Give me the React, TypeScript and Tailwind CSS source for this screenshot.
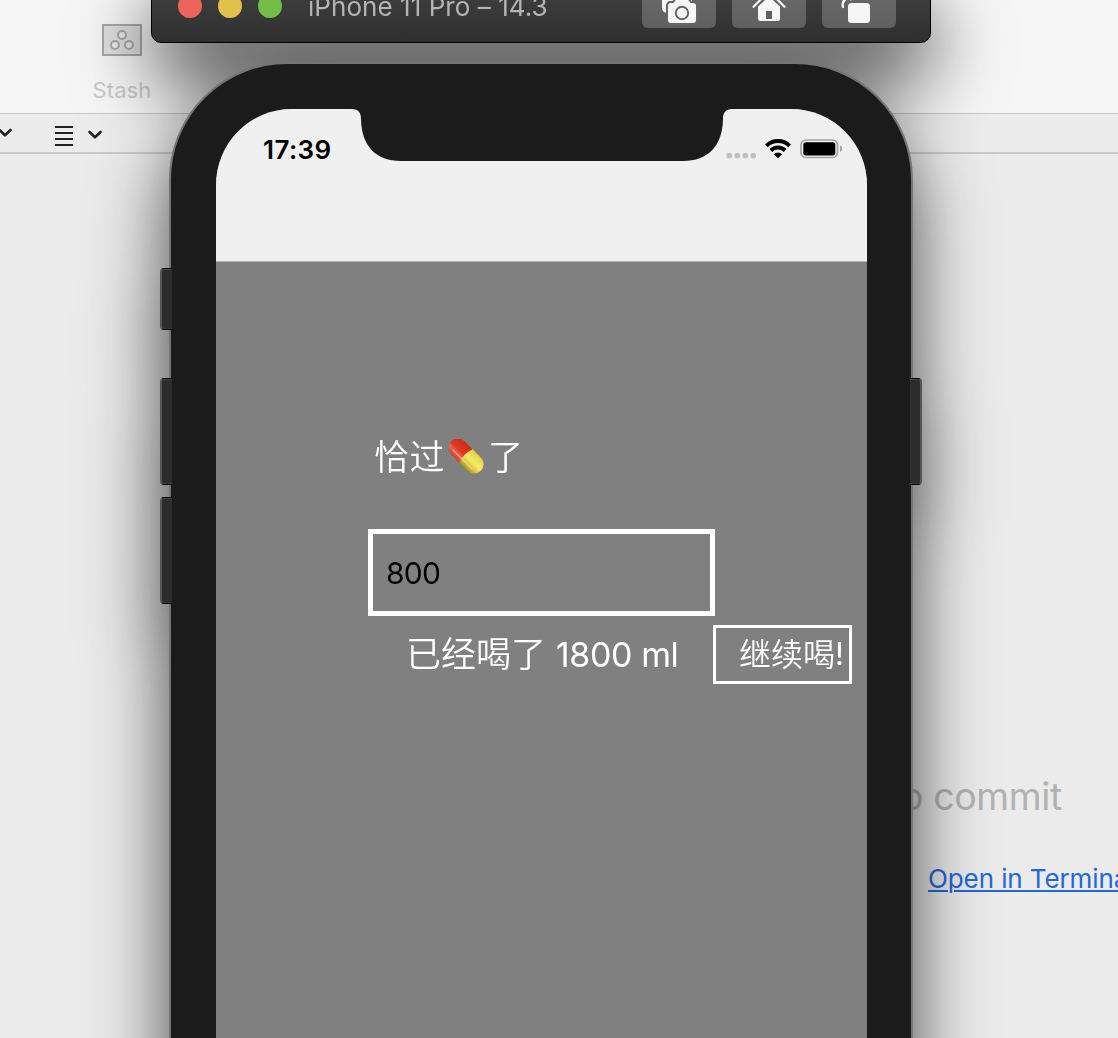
import React from "react";

const inter = "font-['Inter','Noto_Sans_CJK_SC',sans-serif]";

function StashIcon() {
  return (
    <svg width="40" height="32" viewBox="0 0 40 32" fill="none" stroke="#a8a8a8">
      <rect x="1" y="1" width="38" height="30" fill="#e0e0e0" strokeWidth="2" />
      <g fill="#ececec" strokeWidth="2">
        <circle cx="20" cy="11" r="4" />
        <circle cx="13" cy="21" r="4" />
        <circle cx="27" cy="21" r="4" />
      </g>
    </svg>
  );
}

function Chevron() {
  return (
    <svg width="16" height="10" viewBox="0 0 16 10" fill="none" stroke="#222" strokeWidth="2.6" strokeLinecap="round" strokeLinejoin="round">
      <path d="M2.5 2 8 7.3 13.5 2" />
    </svg>
  );
}

function ListIcon() {
  return (
    <svg width="18" height="20" viewBox="0 0 18 20" fill="#222">
      <rect y="0" width="18" height="2" />
      <rect y="6" width="18" height="2" />
      <rect y="12" width="18" height="2" />
      <rect y="18" width="18" height="2" />
    </svg>
  );
}

function GitWindow() {
  return (
    <div className="flex h-full w-full flex-col bg-[#ebebeb]">
      <div className="flex h-[113px] shrink-0 bg-[#f6f6f6] pl-[92px] pt-6">
        <div className="flex w-[60px] flex-col items-center">
          <StashIcon />
          <span className="mt-[19px] text-[22px] leading-[30px] tracking-[0.1px] text-[#c9c9c9]">Stash</span>
        </div>
      </div>
      <div className="flex h-[41px] shrink-0 items-center border-b-2 border-t border-b-[#cacaca] border-t-[#c8c8c8] bg-[#ececec]">
        <div className="-ml-[3px]">
          <Chevron />
        </div>
        <div className="ml-[42px] mt-[5px]">
          <ListIcon />
        </div>
        <div className="ml-[14px] mt-[3px]">
          <Chevron />
        </div>
      </div>
      <div className="flex flex-1 flex-col items-start pt-[619px]">
        <span className="ml-[901px] w-[160px] whitespace-nowrap text-[37.5px] leading-[48px] tracking-[-0.4px] text-[#b2b2b2]">
          o commit
        </span>
        <span className="ml-[928px] mt-[42px] whitespace-nowrap text-[26px] leading-[32px] tracking-[-0.1px] text-[#2268d8] underline decoration-2 underline-offset-[2px]">
          Open in Terminal
        </span>
      </div>
    </div>
  );
}

function ToolButton({ children }: { children: React.ReactNode }) {
  return (
    <div className="flex h-[44px] w-[74px] items-end justify-center rounded-[6px] bg-gradient-to-b from-[#6b6b6b] to-[#606060]">
      {children}
    </div>
  );
}

function TitleBar() {
  return (
    <div className="-mt-[30px] flex h-[73px] w-[780px] items-start rounded-[10px] border border-black bg-gradient-to-b from-[#454545] to-[#2f2f2f] pl-[26px] pr-[34px]">
      <div className="mt-[23px] flex gap-4">
        <i className="size-6 rounded-full bg-[#ee665b]" />
        <i className="size-6 rounded-full bg-[#e1c04c]" />
        <i className="size-6 rounded-full bg-[#72be47]" />
      </div>
      <span className="ml-[26px] mt-[20px] whitespace-nowrap text-[26px] leading-[32px] tracking-[0.05px] text-[#b4b4b4]">
        iPhone 11 Pro – 14.3
      </span>
      <div className="ml-auto mt-[13px] flex gap-4">
        <ToolButton>
          <svg width="74" height="44" viewBox="0 0 74 44">
            <path d="M20 12h30v6H31l-4 2-2 9c-3-.5-5-2-5-5z" fill="#f6f6f6" />
            <path
              d="M28 19h3.500l3-4h11l3 4H51a3 3 0 0 1 3 3v14a3 3 0 0 1-3 3H29a3 3 0 0 1-3-3V22a3 3 0 0 1 2-3z"
              fill="#f6f6f6"
              stroke="#666"
              strokeWidth="4"
              paintOrder="stroke"
            />
            <circle cx="40" cy="29" r="6.2" fill="none" stroke="#626262" strokeWidth="1.9" />
          </svg>
        </ToolButton>
        <ToolButton>
          <svg width="74" height="44" viewBox="0 0 74 44">
            <path d="M37 12.5 48 22.5v12a2.500 2.500 0 0 1-2.500 2.500h-17a2.500 2.500 0 0 1-2.500-2.500V22.500z" fill="#f6f6f6" />
            <path d="M21.500 22.800 37 7.300 52.500 22.800" fill="none" stroke="#646464" strokeWidth="5.500" />
            <path d="M21.500 22.800 37 7.300 52.500 22.800" fill="none" stroke="#f6f6f6" strokeWidth="2.300" strokeLinecap="round" />
            <rect x="34" y="27" width="6" height="8" fill="#606060" />
          </svg>
        </ToolButton>
        <ToolButton>
          <svg width="74" height="44" viewBox="0 0 74 44">
            <rect x="26" y="19" width="22" height="20" rx="3.500" fill="#f6f6f6" />
            <path d="M21 23C20 19.500 21 17 24 14.500" fill="none" stroke="#f6f6f6" strokeWidth="2.300" strokeLinecap="round" />
            <path d="M28.500 13v4l3.500-3z" fill="#f6f6f6" />
          </svg>
        </ToolButton>
      </div>
    </div>
  );
}

function Notch() {
  return (
    <svg className="block shrink-0" width="382" height="53" viewBox="0 0 382 53" fill="#1b1b1b">
      <path d="M0 0C7 0 10 3 10 10C10.500 37 25 52 50 52H332C357 52 371.500 37 372 10C372 3 375 0 382 0Z" />
    </svg>
  );
}

function StatusIcons() {
  return (
    <svg width="118" height="24" viewBox="0 0 118 24">
      <g fill="#c3c3c3">
        <rect x="0.500" y="15" width="5.500" height="5.500" rx="1.800" />
        <rect x="8.500" y="15" width="5.500" height="5.500" rx="1.800" />
        <rect x="16.500" y="15" width="5.500" height="5.500" rx="1.800" />
        <rect x="24.500" y="15" width="5.500" height="5.500" rx="1.800" />
      </g>
      <g fill="none" stroke="#000" strokeWidth="3.900">
        <path d="M40.400 7.800A16.600 16.600 0 0 1 63.600 7.800" />
        <path d="M44.800 12.500A10.200 10.200 0 0 1 59.200 12.500" />
      </g>
      <path d="M52 20.300 47.900 16.200A5.800 5.800 0 0 1 56.100 16.200Z" />
      <rect x="75" y="2" width="36.500" height="17.500" rx="5" fill="none" stroke="#a5a5a5" strokeWidth="1.700" />
      <rect x="77.300" y="4.200" width="32" height="13.200" rx="2.600" />
      <path d="M114 7.500c2.700 1.200 2.700 5.200 0 6.400z" fill="#a0a0a0" />
    </svg>
  );
}

function Pill() {
  return (
    <svg className="mx-[3px] inline-block" width="37" height="37" viewBox="0 0 37 37">
      <defs>
        <linearGradient id="red" x1="0" y1="1" x2="0" y2="0">
          <stop offset="0" stopColor="#c23a26" />
          <stop offset="0.250" stopColor="#ea6a55" />
          <stop offset="0.450" stopColor="#e23a24" />
          <stop offset="1" stopColor="#cc2a18" />
        </linearGradient>
        <linearGradient id="yellow" x1="0" y1="0" x2="0" y2="1">
          <stop offset="0" stopColor="#e6d040" />
          <stop offset="0.450" stopColor="#f7ec6a" />
          <stop offset="0.750" stopColor="#dcc740" />
          <stop offset="1" stopColor="#a98f22" />
        </linearGradient>
      </defs>
      <g transform="translate(18 17) rotate(45)">
        <path d="M0-9.400H-11.500A9.400 9.400 0 0 0-11.500 9.400H0Z" fill="url(#red)" />
        <path d="M0-9.400H11.500A9.400 9.400 0 0 1 11.500 9.400H0Q-3.500 0 0-9.400Z" fill="url(#yellow)" />
        <path d="M-13 5H13" stroke="#fff" strokeOpacity="0.400" strokeWidth="1.100" strokeLinecap="round" />
      </g>
    </svg>
  );
}

function SideButton({ className }: { className: string }) {
  return (
    <div className={`absolute z-10 border-y border-y-black bg-[#2c2c2c] shadow-[inset_0_1px_0_#484848,inset_0_-1px_0_#3a3a3a] ${className}`} />
  );
}

function Phone() {
  return (
    <div className="relative mt-[19px] h-[1400px] w-[744px]">
      <SideButton className="-left-[9px] top-[206px] h-[62px] w-[12px] rounded-l-[4px] border-l-2 border-l-[#555]" />
      <SideButton className="-left-[9px] top-[316px] h-[107px] w-[12px] rounded-l-[4px] border-l-2 border-l-[#555]" />
      <SideButton className="-left-[9px] top-[435px] h-[107px] w-[12px] rounded-l-[4px] border-l-2 border-l-[#555]" />
      <SideButton className="-right-[9px] top-[316px] h-[107px] w-[12px] rounded-r-[4px] border-r-2 border-r-[#555]" />
      <div className="relative h-full rounded-[118px] border-2 border-[#747474] bg-[#1b1b1b] pl-[45px] pr-[44px] pt-[45px]">
        <div className="flex h-[1300px] flex-col overflow-hidden rounded-[76px] bg-[#808080]">
          <div className="flex h-[153px] shrink-0 items-start border-b border-[#b2b5b2] bg-[#f0f0f0]">
            <div className="w-[135px] shrink-0 pl-[47px] pt-[25px] text-[26px] font-semibold leading-[32px] tracking-[0.4px] text-black">
              17:39
            </div>
            <Notch />
            <div className="-ml-[7px] pt-[29px]">
              <StatusIcons />
            </div>
          </div>
          <div className="flex flex-col items-start pl-[152px] font-[350] text-white">
            <div className="ml-[6px] mt-[172px] flex h-[46px] items-center whitespace-nowrap text-[35px] tracking-[0.5px]">
              恰过
              <Pill />
              了
            </div>
            <div className="mt-[49px] flex h-[87px] w-[347px] items-center border-[5px] border-white pl-[13px] pt-[2px] text-[30px] font-normal tracking-[-0.8px] text-black">
              800
            </div>
            <div className="mt-[9px] flex items-center">
              <span className="ml-[38px] w-[307px] whitespace-nowrap text-[35px] leading-[46px]">
                已经喝了 <span className="text-[34px] font-normal tracking-[-0.4px]">1800 ml</span>
              </span>
              <div className="flex h-[59px] w-[139px] items-center justify-end whitespace-nowrap border-[3px] border-white pr-[5px] text-[32px]">
                继续喝<span className="text-[31px] font-normal">!</span>
              </div>
            </div>
          </div>
        </div>
      </div>
    </div>
  );
}

export default function App() {
  return (
    <div className={`relative h-[1038px] w-[1118px] overflow-hidden ${inter}`}>
      <GitWindow />
      <div className="absolute left-[151px] top-0 flex flex-col items-center [filter:drop-shadow(0_36px_38px_rgba(0,0,0,0.7))]">
        <TitleBar />
        <Phone />
      </div>
    </div>
  );
}
